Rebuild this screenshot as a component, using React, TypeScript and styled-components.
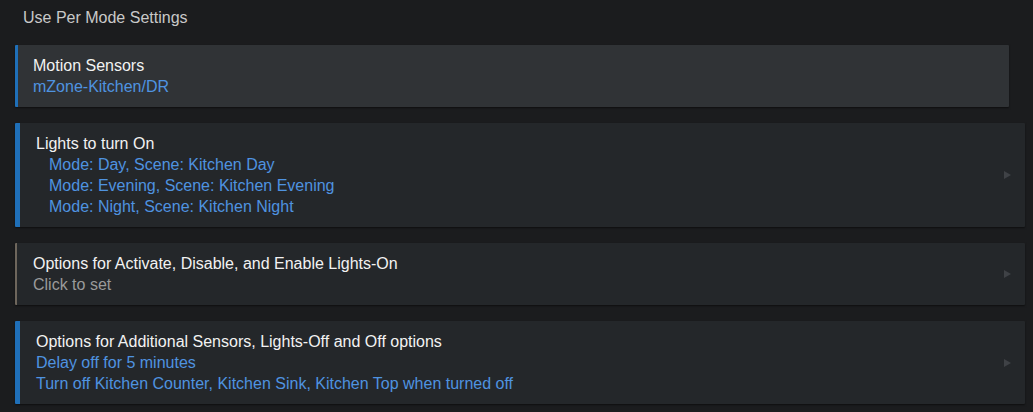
import React from 'react';
import styled, { createGlobalStyle } from 'styled-components';

const GlobalStyle = createGlobalStyle`
	html, body {
		margin: 0;
		padding: 0;
		background: #1b1c1e;
	}
	body {
		font-family: 'Liberation Sans', Arial, sans-serif;
		font-size: 16px;
	}
`;

type Accent = 'blue' | 'muted';
type Tone = 'raised' | 'flat';

interface Section {
	title: string;
	lines: string[];
	indent?: boolean;
	accent: Accent;
	tone: Tone;
	arrow: boolean;
	placeholder?: boolean;
}

const sections: Section[] = [
	{
		title: 'Motion Sensors',
		lines: ['mZone-Kitchen/DR'],
		accent: 'blue',
		tone: 'raised',
		arrow: false,
	},
	{
		title: 'Lights to turn On',
		lines: [
			'Mode: Day, Scene: Kitchen Day',
			'Mode: Evening, Scene: Kitchen Evening',
			'Mode: Night, Scene: Kitchen Night',
		],
		indent: true,
		accent: 'blue',
		tone: 'flat',
		arrow: true,
	},
	{
		title: 'Options for Activate, Disable, and Enable Lights-On',
		lines: ['Click to set'],
		accent: 'muted',
		tone: 'flat',
		arrow: true,
		placeholder: true,
	},
	{
		title: 'Options for Additional Sensors, Lights-Off and Off options',
		lines: ['Delay off for 5 minutes', 'Turn off Kitchen Counter, Kitchen Sink, Kitchen Top when turned off'],
		accent: 'blue',
		tone: 'flat',
		arrow: true,
	},
];

const Page = styled.div`
	padding: 7px 8px 8px 15px;
	display: flex;
	flex-direction: column;
	gap: 16px;
`;

const Heading = styled.div`
	color: #c9c9c9;
	padding-left: 8px;
	line-height: 21px;
	margin-bottom: 1px;
`;

const Card = styled.div<{ $accent: Accent; $tone: Tone }>`
	position: relative;
	display: flex;
	flex-direction: column;
	margin-right: ${(p) => (p.$tone === 'raised' ? '16px' : '0')};
	padding: ${(p) => (p.$tone === 'raised' ? '10px 16px 10px 15px' : '10px 16px 10px 16px')};
	background: ${(p) => (p.$tone === 'raised' ? '#303336' : '#24272a')};
	border-left: ${(p) => (p.$accent === 'muted' ? '2px solid #6e665c' : p.$tone === 'raised' ? '3px solid #1f6fb8' : '5px solid #1f6fb8')};
	border-radius: 1px;
	box-shadow: 0 1px 2px rgba(0, 0, 0, 0.5);
`;

const Title = styled.div`
	color: #f2f2f2;
	line-height: 21px;
`;

const Detail = styled.div<{ $indent?: boolean; $placeholder?: boolean }>`
	color: ${(p) => (p.$placeholder ? '#9a9a9a' : '#4f93e0')};
	line-height: 21px;
	padding-left: ${(p) => (p.$indent ? '13px' : '0')};
`;

const Arrow = styled.span`
	position: absolute;
	right: 14px;
	top: 50%;
	transform: translateY(-50%);
	width: 0;
	height: 0;
	border-top: 4px solid transparent;
	border-bottom: 4px solid transparent;
	border-left: 7px solid #3f4246;
`;

const App: React.FC = () => (
	<>
		<GlobalStyle />
		<Page>
			<Heading>Use Per Mode Settings</Heading>
			{sections.map((s, i) => (
				<Card key={i} $accent={s.accent} $tone={s.tone}>
					<Title>{s.title}</Title>
					{s.lines.map((line, j) => (
						<Detail key={j} $indent={s.indent} $placeholder={s.placeholder}>
							{line}
						</Detail>
					))}
					{s.arrow && <Arrow />}
				</Card>
			))}
		</Page>
	</>
);

export default App;
